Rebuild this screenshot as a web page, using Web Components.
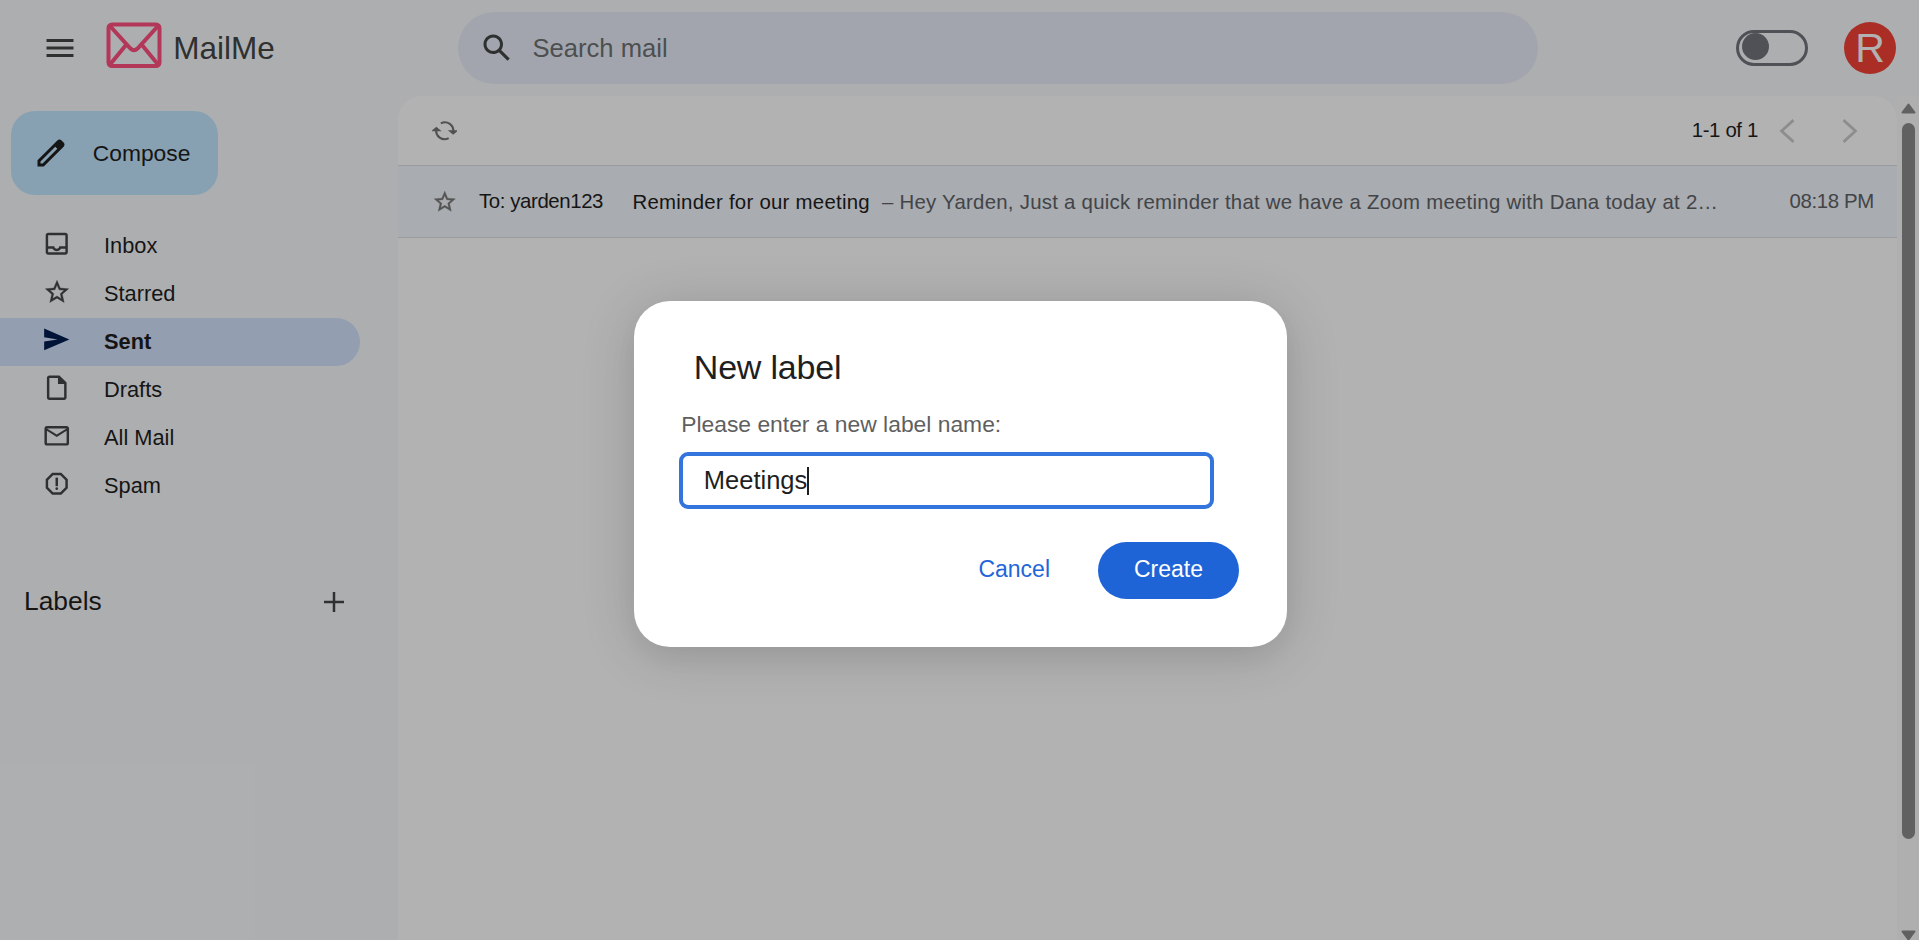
<!DOCTYPE html>
<html lang="en">
<head>
<meta charset="utf-8">
<title>MailMe</title>
<style>
html,body{margin:0;height:100%;overflow:hidden;background:#f8fafd;font-family:"Liberation Sans",Arial,sans-serif;color:#1f1f1f}
</style>
</head>
<body>
<mail-app></mail-app>
<script>
const ICONS={
menu:'<path d="M3 18h18v-2H3v2zm0-5h18v-2H3v2zm0-7v2h18V6H3z"/>',
search:'<path d="M20.49 19l-5.73-5.73C15.53 12.2 16 10.91 16 9.5 16 5.91 13.09 3 9.5 3S3 5.91 3 9.5 5.91 16 9.5 16c1.41 0 2.7-.47 3.77-1.24L19 20.49 20.49 19zM5 9.5C5 7.01 7.01 5 9.5 5S14 7.01 14 9.5 11.99 14 9.5 14 5 11.99 5 9.5z"/>',
pencil:'<path d="M20.41 4.94l-1.35-1.35c-.78-.78-2.05-.78-2.83 0L3 16.82V21h4.18L20.41 7.77c.79-.78.79-2.05 0-2.83zm-14 14.12L5 19v-1.36l9.82-9.82 1.41 1.41-9.82 9.83z"/>',
inbox:'<path d="M19 3H5c-1.1 0-2 .9-2 2v14c0 1.1.9 2 2 2h14c1.1 0 2-.9 2-2V5c0-1.1-.9-2-2-2zm0 16H5v-3h3.560c.69 1.190 1.970 2 3.450 2s2.750-.81 3.450-2H19v3zm0-5h-4.990c0 1.100-.9 2-2 2s-2-.9-2-2H5V5h14v9z"/>',
star:'<path stroke="currentColor" stroke-width=".3" d="M22 9.24l-7.190-.62L12 2 9.190 8.630 2 9.240l5.460 4.730L5.820 21 12 17.270 18.180 21l-1.630-7.030L22 9.240zM12 15.400l-3.760 2.270 1-4.280-3.320-2.880 4.380-.38L12 6.100l1.710 4.040 4.380.38-3.320 2.880 1 4.280L12 15.400z"/>',
send:'<path d="M1.800 3v7.300L13 12 1.800 13.700V21L22.800 12z"/>',
draft:'<path d="M14.200 2H6c-1.100 0-2 .9-2 2v16c0 1.100.9 2 2 2h12c1.100 0 2-.9 2-2V7.800zM18 20H6V4h7v5h5z"/>',
mail:'<path d="M20 4H4c-1.100 0-2 .9-2 2v12c0 1.100.9 2 2 2h16c1.100 0 2-.9 2-2V6c0-1.100-.9-2-2-2zm0 14H4V8l8 5 8-5v10zm-8-7L4 6h16l-8 5z"/>',
spam:'<path d="M15.730 3H8.270L3 8.270v7.460L8.270 21h7.460L21 15.730V8.270L15.730 3zM19 14.900L14.900 19H9.100L5 14.900V9.100L9.100 5h5.800L19 9.100v5.800z"/><rect x="11" y="7" width="2" height="7"/><circle cx="12" cy="16" r="1.1"/>',
plus:'<path d="M20 13h-7v7h-2v-7H4v-2h7V4h2v7h7v2z"/>',
refresh:'<g fill="none" stroke="currentColor" stroke-width="2"><path d="M8.300 5.100A7.900 7.900 0 0 1 19.900 13.500M15.700 18.900A7.900 7.900 0 0 1 4.100 10.500"/><path d="M16.700 12.200l3.200 2.700 3.200-2.700zM.9 11.800l3.200-2.700 3.200 2.700z" fill="currentColor" stroke-width="1.300"/></g>',
left:'<path d="M18 2L7 12l11 10" fill="none" stroke="currentColor" stroke-width="2.600"/>',
right:'<path d="M6 2l11 10L6 22" fill="none" stroke="currentColor" stroke-width="2.600"/>'
};
function define(name,html,init){
  customElements.define(name,class extends HTMLElement{
    constructor(){super();this.attachShadow({mode:'open'}).innerHTML=html}
    connectedCallback(){if(init)init(this,this.shadowRoot)}
  });
}
define('m-icon','<style>:host{display:block;flex:none}svg{display:block;fill:currentColor}</style><svg viewBox="0 0 24 24"></svg>',(el,r)=>{
  const s=el.getAttribute('size')||24,v=r.querySelector('svg');
  v.setAttribute('width',s);v.setAttribute('height',s);v.innerHTML=ICONS[el.getAttribute('name')];
});
define('brand-logo',`<style>:host{display:flex;align-items:center}svg{display:block;margin-bottom:4px}span{font-size:31.500px;line-height:36px;color:#444746;margin:0 0 1px 11.800px}</style>
<svg width="56" height="48" viewBox="0 0 56 48" fill="none" stroke="#ff4f7f" stroke-width="4"><rect x="2.500" y="2.500" width="51" height="41.500" rx="3.500"/><path d="M4 4L24.500 26.500Q28 30 31.500 26.500L52 4M4 42.500L20 23M52 42.500L36 23"/></svg><span>MailMe</span>`);
define('search-bar',`<style>:host{display:flex;align-items:center;box-sizing:border-box;width:1080px;height:72px;border-radius:36px;background:#e9edf8;padding-left:21px;color:#444746}span{font-size:25.600px;color:#6f7173;margin-left:17.500px}</style><m-icon name="search" size="36"></m-icon><span>Search mail</span>`);
define('theme-toggle',`<style>:host{display:block;box-sizing:border-box;width:72px;height:36px;border:3px solid #72757b;border-radius:18px}i{display:block;width:27px;height:27px;margin-left:3px;border-radius:50%;background:#72757b}</style><i></i>`);
define('user-avatar',`<style>:host{display:flex;align-items:center;justify-content:center;width:52px;height:52px;border-radius:50%;background:#f44336;color:#fff;font-size:41px;line-height:52px}</style><slot></slot>`);
define('app-header',`<style>:host{display:flex;align-items:center;height:96px;box-sizing:border-box;padding:0 23px 0 42px}.menu{color:#444746}brand-logo{margin-left:27.500px;width:352.500px}theme-toggle{margin-left:auto}user-avatar{margin-left:36px}</style>
<m-icon class="menu" name="menu" size="36"></m-icon><brand-logo></brand-logo><search-bar></search-bar><theme-toggle></theme-toggle><user-avatar>R</user-avatar>`);
define('compose-button',`<style>:host{display:flex;align-items:center;width:185px;height:84px;padding-left:22px;border-radius:24px;background:#c2e7ff}span{font-size:22.800px;margin-left:23.800px}</style><m-icon name="pencil" size="36"></m-icon><span><slot></slot></span>`);
define('nav-item',`<style>:host{display:flex;align-items:center;height:48px;width:360px;border-radius:0 24px 24px 0;font-size:21.800px}:host([active]){background:#d3e3fd;font-weight:700}
.i{width:113px;margin-right:-9px;display:flex;justify-content:center;margin-bottom:5px;color:#444746}:host([active]) .i{color:#001d50}</style><div class="i"></div><span><slot></slot></span>`,(el,r)=>{
  r.querySelector('.i').innerHTML='<m-icon name="'+el.getAttribute('icon')+'" size="'+(el.getAttribute('size')||30)+'"></m-icon>';
});
define('side-bar',`<style>:host{display:block;width:398px;flex:none;padding-top:15px;box-sizing:border-box}compose-button{margin:0 0 27px 11px}.labels{display:flex;align-items:center;justify-content:space-between;margin-top:74px;padding:0 49px 0 24px;height:36px;font-size:26.400px}m-icon{color:#444746}.labels span{margin-bottom:1px}</style>
<compose-button>Compose</compose-button>
<nav-item icon="inbox" size="29.500">Inbox</nav-item><nav-item icon="star" size="28">Starred</nav-item><nav-item icon="send" size="28.800" active>Sent</nav-item><nav-item icon="draft" size="29.500">Drafts</nav-item><nav-item icon="mail" size="29.500">All Mail</nav-item><nav-item icon="spam" size="29.500">Spam</nav-item>
<div class="labels"><span>Labels</span><m-icon name="plus" size="30"></m-icon></div>`);
define('list-toolbar',`<style>:host{display:flex;align-items:center;height:69px;padding:0 34px 0 33.500px;font-size:20.400px;letter-spacing:-.35px}.refresh{color:#747474}.count{margin-left:auto;margin-right:16px}.nav{color:#cbcbcb}.nav+.nav{margin-left:37px}</style>
<m-icon class="refresh" name="refresh" size="25.500"></m-icon><span class="count">1-1 of 1</span><m-icon class="nav" name="left" size="26"></m-icon><m-icon class="nav" name="right" size="26"></m-icon>`);
define('mail-row',`<style>:host{display:flex;align-items:center;height:71px;border-top:1px solid #dcdfe4;border-bottom:1px solid #dcdfe4;background:#f2f6fc;font-size:20.400px;padding-left:34px;padding-right:23px}
m-icon{color:#777;margin-top:1px}.to{width:153.500px;margin-left:21.500px;letter-spacing:-.4px;margin-bottom:1px}.text{flex:none;letter-spacing:.26px;white-space:nowrap;color:#5f6368;margin-top:1px}.text b{font-weight:400;color:#1f1f1f;margin-right:12px}.time{color:#5f6368;letter-spacing:-.35px;margin-left:auto;margin-bottom:1px}</style>
<m-icon name="star" size="25.500"></m-icon><span class="to">To: yarden123</span><span class="text"><b>Reminder for our meeting</b>– Hey Yarden, Just a quick reminder that we have a Zoom meeting with Dana today at 2…</span><span class="time">08:18 PM</span>`);
define('mail-list',`<style>:host{display:block;flex:1;min-width:0;background:#fff;border-radius:24px 24px 0 0}</style><list-toolbar></list-toolbar><mail-row></mail-row>`);
define('scroll-rail',`<style>:host{display:flex;flex-direction:column;align-items:center;width:22px;flex:none;padding:7px 0 0;box-sizing:border-box;background:#fbfbfc;overflow:hidden;height:844px}i{width:13px;height:716px;border-radius:7px;background:#8c8c8c;margin:9px 0 91px;flex:none}svg{flex:none;display:block}</style>
<svg width="15" height="11" fill="#8c8c8c" stroke="#8c8c8c" stroke-width="2" stroke-linejoin="round"><path d="M7.500 1.500L13.500 9.500h-12z"/></svg><i></i><svg width="15" height="11" fill="#8c8c8c" stroke="#8c8c8c" stroke-width="2" stroke-linejoin="round"><path d="M7.500 9.500L13.500 1.500h-12z"/></svg>`);
define('label-dialog',`<style>:host{display:block;box-sizing:border-box;width:653px;height:346px;margin-top:8px;border-radius:36px;background:#fff;padding:45px 48px 0 45px;box-shadow:0 6px 54px rgba(0,0,0,.16),0 12px 24px rgba(0,0,0,.03)}
h1{margin:0 0 0 14.800px;font-weight:400;font-size:34px;line-height:42px;letter-spacing:-.2px}p{margin:21px 0 0 2.200px;font-size:22.850px;line-height:30px;color:#5f5f5f}
.field{box-sizing:border-box;width:535px;height:57px;margin-top:13px;border:4px solid #3475dd;border-radius:9px;display:flex;align-items:center;padding-left:20.800px;font-size:25.500px}.field span{margin-top:-1px}.field i{width:2px;height:28px;background:#1f1f1f}
.actions{display:flex;justify-content:flex-end;align-items:center;margin-top:33px;font-size:23px}.cancel{color:#1f66d9;margin-right:48px;margin-bottom:3px}.create{width:141px;height:57px;box-sizing:border-box;padding-bottom:3px;border-radius:29px;background:#1e64d7;color:#fff;display:flex;align-items:center;justify-content:center}</style>
<h1>New label</h1><p>Please enter a new label name:</p><div class="field"><span>Meetings</span><i></i></div><div class="actions"><span class="cancel">Cancel</span><span class="create">Create</span></div>`);
define('modal-scrim',`<style>:host{position:absolute;inset:0;display:flex;align-items:center;justify-content:center;background:rgba(0,0,0,.3);padding-left:2px}</style><slot></slot>`);
define('mail-app',`<style>:host{display:block;height:940px;overflow:hidden;position:relative}main{display:flex;height:844px}</style><app-header></app-header><main><side-bar></side-bar><mail-list></mail-list><scroll-rail></scroll-rail></main><modal-scrim><label-dialog></label-dialog></modal-scrim>`);
</script>
</body>
</html>
